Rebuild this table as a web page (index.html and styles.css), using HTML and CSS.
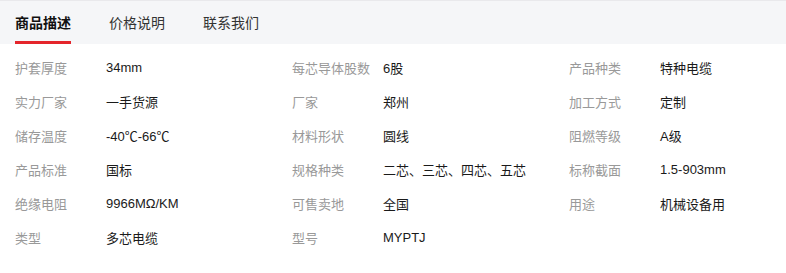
FILE: index.html
```html
<!DOCTYPE html>
<html lang="zh-CN">
<head>
<meta charset="utf-8">
<link rel="stylesheet" href="styles.css">
</head>
<body>
<div class="tabs">
  <div class="tab active">商品描述</div>
  <div class="tab">价格说明</div>
  <div class="tab">联系我们</div>
</div>
<div class="attrs">
  <div class="attr"><span class="k">护套厚度</span><span class="v">34mm</span></div>
  <div class="attr"><span class="k">每芯导体股数</span><span class="v">6股</span></div>
  <div class="attr"><span class="k">产品种类</span><span class="v">特种电缆</span></div>
  <div class="attr"><span class="k">实力厂家</span><span class="v">一手货源</span></div>
  <div class="attr"><span class="k">厂家</span><span class="v">郑州</span></div>
  <div class="attr"><span class="k">加工方式</span><span class="v">定制</span></div>
  <div class="attr"><span class="k">储存温度</span><span class="v">-40℃-66℃</span></div>
  <div class="attr"><span class="k">材料形状</span><span class="v">圆线</span></div>
  <div class="attr"><span class="k">阻燃等级</span><span class="v">A级</span></div>
  <div class="attr"><span class="k">产品标准</span><span class="v">国标</span></div>
  <div class="attr"><span class="k">规格种类</span><span class="v">二芯、三芯、四芯、五芯</span></div>
  <div class="attr"><span class="k">标称截面</span><span class="v">1.5-903mm</span></div>
  <div class="attr"><span class="k">绝缘电阻</span><span class="v">9966MΩ/KM</span></div>
  <div class="attr"><span class="k">可售卖地</span><span class="v">全国</span></div>
  <div class="attr"><span class="k">用途</span><span class="v">机械设备用</span></div>
  <div class="attr"><span class="k">类型</span><span class="v">多芯电缆</span></div>
  <div class="attr"><span class="k">型号</span><span class="v">MYPTJ</span></div>
</div>
</body>
</html>
```
FILE: styles.css
```css
html, body {
  margin: 0;
  padding: 0;
  background: #fff;
}
body {
  font-family: "Liberation Sans", "Noto Sans CJK SC", sans-serif;
  color: #222;
}
.tabs {
  display: flex;
  height: 43px;
  border-top: 1px solid #e9e9ec;
  background: #f5f6f8;
  padding-left: 15px;
  gap: 38px;
}
.tab {
  position: relative;
  display: flex;
  align-items: center;
  font-size: 14px;
  color: #333;
  line-height: 1;
}
.tab.active {
  font-weight: bold;
  color: #111;
}
.tab.active::after {
  content: "";
  position: absolute;
  left: 0;
  right: 0;
  bottom: 0;
  height: 3px;
  background: #e4252b;
}
.attrs {
  display: grid;
  grid-template-columns: 277px 277px 1fr;
  grid-auto-rows: 34px;
  padding: 6px 0 0 15px;
}
.attr {
  display: flex;
  align-items: center;
  font-size: 13px;
}
.k {
  width: 91px;
  flex: none;
  color: #999;
}
.v {
  color: #1a1a1a;
}
```
